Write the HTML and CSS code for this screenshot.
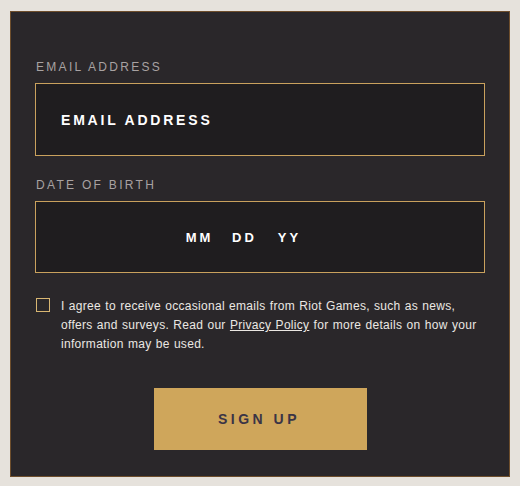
FILE: index.html
```html
<!DOCTYPE html>
<html>
<head>
<meta charset="utf-8">
<link rel="stylesheet" href="styles.css">
</head>
<body>
<div class="panel">
  <div class="field-label">EMAIL ADDRESS</div>
  <div class="input email"><span>EMAIL ADDRESS</span></div>
  <div class="field-label dob-label">DATE OF BIRTH</div>
  <div class="input dob"><span class="part">MM</span><span class="part">DD</span><span class="part">YY</span></div>
  <div class="consent">
    <span class="check"></span>
    <p class="consent-text">I agree to receive occasional emails from Riot Games, such as news, offers and surveys. Read our <a href="#">Privacy Policy</a> for more details on how your information may be used.</p>
  </div>
  <button class="signup">SIGN UP</button>
</div>
</body>
</html>
```
FILE: styles.css
```css
html, body {
  margin: 0;
  padding: 0;
}
body {
  background: #e6e2dc;
  font-family: "Liberation Sans", Arial, sans-serif;
  padding: 11px 10px 9px 10px;
}
.panel {
  box-sizing: border-box;
  width: 500px;
  height: 466px;
  background: #2a272a;
  border: 1px solid #6e4e2c;
  padding: 48px 24px 26px 24px;
  display: flex;
  flex-direction: column;
}
.field-label {
  font-size: 12px;
  line-height: 14px;
  letter-spacing: 2.3px;
  color: #a8a2a2;
  padding-left: 1px;
  margin-bottom: 9px;
}
.dob-label {
  margin-top: 22px;
}
.input {
  box-sizing: border-box;
  width: 450px;
  border: 1px solid #c9a15d;
  background: #1f1d1f;
  color: #ffffff;
  font-weight: bold;
  display: flex;
  align-items: center;
}
.email {
  height: 73px;
  padding-left: 25px;
  font-size: 14px;
  letter-spacing: 2.8px;
}
.dob {
  height: 72px;
  padding-left: 141px;
  font-size: 13px;
  letter-spacing: 3px;
}
.part {
  width: 45px;
  text-align: center;
}
.consent {
  display: flex;
  align-items: flex-start;
  margin-top: 24px;
}
.check {
  box-sizing: border-box;
  flex: none;
  width: 14px;
  height: 14px;
  border: 1px solid #d8b672;
  margin: 1px 11px 0 1px;
}
.consent-text {
  margin: 0;
  width: 420px;
  font-size: 12px;
  line-height: 19px;
  letter-spacing: 0.3px;
  word-spacing: 0.6px;
  color: #ebe7e3;
}
.consent-text a {
  color: #ebe7e3;
  text-decoration: underline;
}
.signup {
  margin: 34px auto 0 auto;
  width: 213px;
  height: 62px;
  border: none;
  background: #cfa65b;
  color: #3a3446;
  font-family: "Liberation Sans", Arial, sans-serif;
  font-weight: bold;
  font-size: 14px;
  letter-spacing: 3.5px;
  padding: 0 2px 0 0;
}
```
